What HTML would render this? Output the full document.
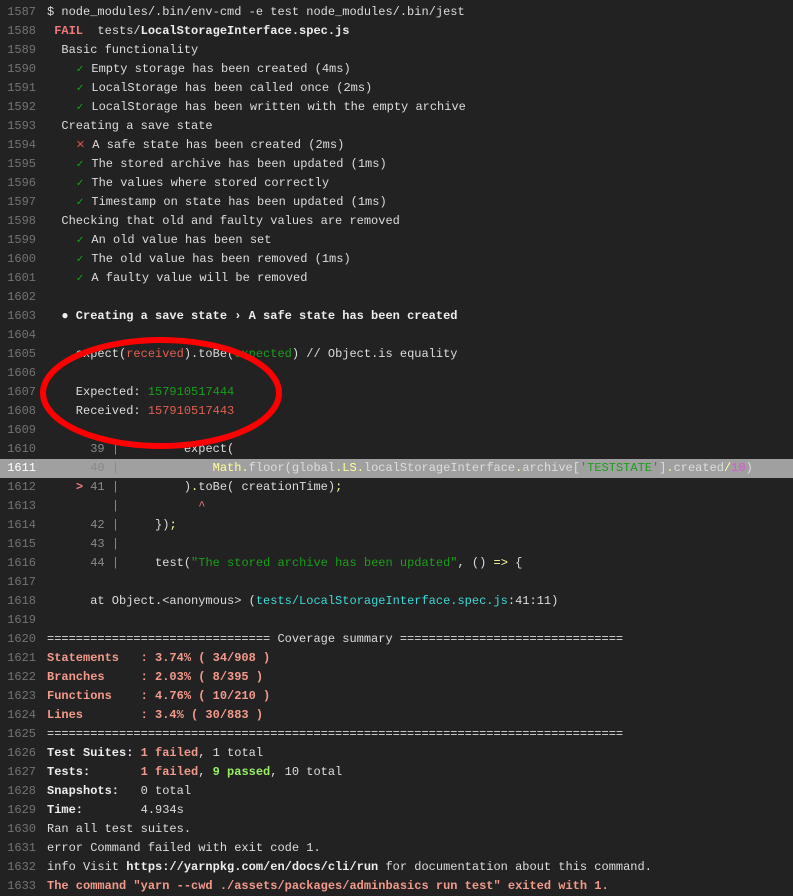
<!DOCTYPE html>
<html><head><meta charset="utf-8"><style>
html,body{margin:0;padding:0;background:#222;}
body{width:793px;height:893px;overflow:hidden;position:relative;font-family:"Liberation Mono",monospace;font-size:12px;color:#ddd;}
.wrap{padding-top:3px;}
.l{height:19px;line-height:19px;white-space:pre;position:relative;}
.n{display:inline-block;width:36px;text-align:right;color:#737373;margin-right:11px;}
.hl{background:#a0a0a0;}
.hl .n{color:#fff;}
.b{font-weight:bold;color:#eee;}
.r{color:#f07878;font-weight:bold;}
.ok{color:#1a1;font-size:10px;}
.x{color:#e05050;font-size:11px;}
.g{color:#1a9f1a;}
.rd{color:#e06050;}
.gy{color:#8a8a8a;}
.y{color:#ffff99;}
.m{color:#e050e0;}
.cy{color:#40d8d8;}
.cov{color:#f39a8c;font-weight:bold;}
.gp{color:#99f066;font-weight:bold;}
svg{position:absolute;left:0;top:0;}
</style></head><body><div class="wrap">
<div class="l"><span class="n">1587</span>$ node_modules/.bin/env-cmd -e test node_modules/.bin/jest</div>
<div class="l"><span class="n">1588</span> <span class="r">FAIL</span>  tests/<span class="b">LocalStorageInterface.spec.js</span></div>
<div class="l"><span class="n">1589</span>  Basic functionality</div>
<div class="l"><span class="n">1590</span>    <span class="ok">✓</span> Empty storage has been created (4ms)</div>
<div class="l"><span class="n">1591</span>    <span class="ok">✓</span> LocalStorage has been called once (2ms)</div>
<div class="l"><span class="n">1592</span>    <span class="ok">✓</span> LocalStorage has been written with the empty archive</div>
<div class="l"><span class="n">1593</span>  Creating a save state</div>
<div class="l"><span class="n">1594</span>    <span class="x">✕</span> A safe state has been created (2ms)</div>
<div class="l"><span class="n">1595</span>    <span class="ok">✓</span> The stored archive has been updated (1ms)</div>
<div class="l"><span class="n">1596</span>    <span class="ok">✓</span> The values where stored correctly</div>
<div class="l"><span class="n">1597</span>    <span class="ok">✓</span> Timestamp on state has been updated (1ms)</div>
<div class="l"><span class="n">1598</span>  Checking that old and faulty values are removed</div>
<div class="l"><span class="n">1599</span>    <span class="ok">✓</span> An old value has been set</div>
<div class="l"><span class="n">1600</span>    <span class="ok">✓</span> The old value has been removed (1ms)</div>
<div class="l"><span class="n">1601</span>    <span class="ok">✓</span> A faulty value will be removed</div>
<div class="l"><span class="n">1602</span></div>
<div class="l"><span class="n">1603</span>  <span class="b">● Creating a save state › A safe state has been created</span></div>
<div class="l"><span class="n">1604</span></div>
<div class="l"><span class="n">1605</span>    expect(<span class="rd">received</span>).toBe(<span class="g">expected</span>) // Object.is equality</div>
<div class="l"><span class="n">1606</span></div>
<div class="l"><span class="n">1607</span>    Expected: <span class="g">157910517444</span></div>
<div class="l"><span class="n">1608</span>    Received: <span class="rd">157910517443</span></div>
<div class="l"><span class="n">1609</span></div>
<div class="l"><span class="n">1610</span>      <span class="gy">39 |</span>         expect(</div>
<div class="l hl"><span class="n">1611</span>      <span class="gy">40 |</span>             <span class="y">Math.</span>floor(global<span class="y">.LS.</span>localStorageInterface<span class="y">.</span>archive[<span class="g">'TESTSTATE'</span>]<span class="y">.</span>created<span class="y">/</span><span class="m">10</span>)</div>
<div class="l"><span class="n">1612</span>    <span class="r">&gt;</span> <span class="gy">41 |</span>         )<span class="y">.</span>toBe( creationTime)<span class="y">;</span></div>
<div class="l"><span class="n">1613</span>         <span class="gy">|</span>           <span class="r" style="font-weight:normal">^</span></div>
<div class="l"><span class="n">1614</span>      <span class="gy">42 |</span>     })<span class="y">;</span></div>
<div class="l"><span class="n">1615</span>      <span class="gy">43 |</span></div>
<div class="l"><span class="n">1616</span>      <span class="gy">44 |</span>     test(<span class="g">"The stored archive has been updated"</span>, () <span class="y">=&gt;</span> {</div>
<div class="l"><span class="n">1617</span></div>
<div class="l"><span class="n">1618</span>      at Object.&lt;anonymous&gt; (<span class="cy">tests/LocalStorageInterface.spec.js</span>:41:11)</div>
<div class="l"><span class="n">1619</span></div>
<div class="l"><span class="n">1620</span>=============================== Coverage summary ===============================</div>
<div class="l"><span class="n">1621</span><span class="cov">Statements   : 3.74% ( 34/908 )</span></div>
<div class="l"><span class="n">1622</span><span class="cov">Branches     : 2.03% ( 8/395 )</span></div>
<div class="l"><span class="n">1623</span><span class="cov">Functions    : 4.76% ( 10/210 )</span></div>
<div class="l"><span class="n">1624</span><span class="cov">Lines        : 3.4% ( 30/883 )</span></div>
<div class="l"><span class="n">1625</span>================================================================================</div>
<div class="l"><span class="n">1626</span><span class="b">Test Suites: </span><span class="cov">1 failed</span>, 1 total</div>
<div class="l"><span class="n">1627</span><span class="b">Tests:       </span><span class="cov">1 failed</span>, <span class="gp">9 passed</span>, 10 total</div>
<div class="l"><span class="n">1628</span><span class="b">Snapshots:   </span>0 total</div>
<div class="l"><span class="n">1629</span><span class="b">Time:        </span>4.934s</div>
<div class="l"><span class="n">1630</span>Ran all test suites.</div>
<div class="l"><span class="n">1631</span>error Command failed with exit code 1.</div>
<div class="l"><span class="n">1632</span>info Visit <span class="b">https://yarnpkg.com/en/docs/cli/run</span> for documentation about this command.</div>
<div class="l"><span class="n">1633</span><span class="cov">The command "yarn --cwd ./assets/packages/adminbasics run test" exited with 1.</span></div>
</div>
<svg width="793" height="893"><ellipse cx="161" cy="393" rx="118" ry="53" fill="none" stroke="#ff0000" stroke-width="6"/></svg>
</body></html>
